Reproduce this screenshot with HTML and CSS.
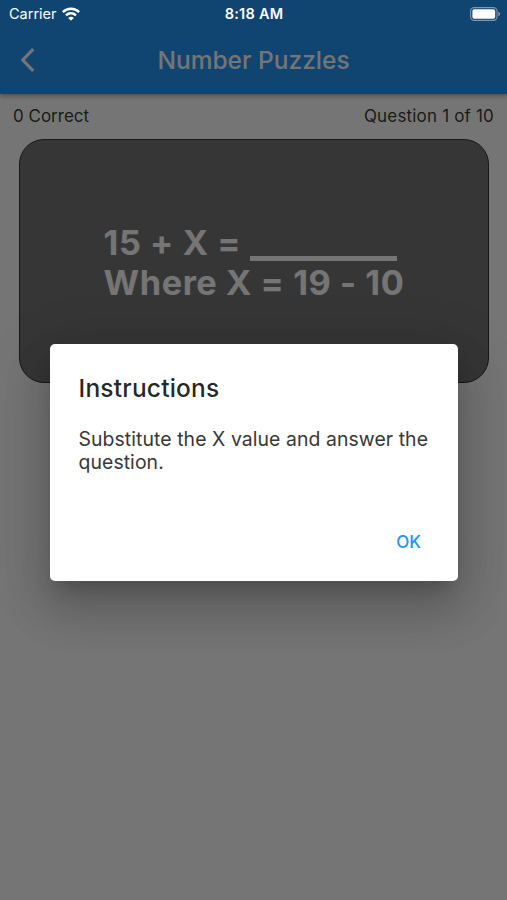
FILE: index.html
```html
<!DOCTYPE html>
<html lang="en">
<head>
  <meta charset="UTF-8">
  <title>Number Puzzles</title>
  <meta name="viewport" content="width=device-width, initial-scale=1.0">
  <link rel="stylesheet" href="styles.css">
</head>
<body>

  <div class="screen">
    <header class="app-bar">
      <button class="back" aria-label="Back">
        <svg width="16" height="26" viewBox="0 0 16 26"><path d="M13.2 2.2 2.8 13l10.4 10.8" fill="none" stroke="currentColor" stroke-width="3.2"/></svg>
      </button>
      <h1>Number Puzzles</h1>
    </header>

    <div class="score">
      <span>0 Correct</span>
      <span class="count">Question 1 of 10</span>
    </div>

    <div class="card">
      <div class="puzzle">
        <div>15 + X = <span class="blank"></span></div>
        <div>Where X = 19 - 10</div>
      </div>
    </div>
  </div>

  <div class="status-bar">
    <div class="carrier">
      <span>Carrier</span>
      <svg width="18" height="14" viewBox="0 0 18 14" fill="none" stroke="#fff" stroke-width="2.4">
        <path d="M.9 5.1a11.5 11.5 0 0 1 16.2 0"/>
        <path d="M4 8.3a7.1 7.1 0 0 1 10 0"/>
        <path d="M9 13.8 6.2 11a4 4 0 0 1 5.6 0z" fill="#fff" stroke="none"/>
      </svg>
    </div>
    <span class="time">8:18 AM</span>
    <svg class="battery" width="31" height="14" viewBox="0 0 31 14">
      <rect x=".6" y=".6" width="26.4" height="12.8" rx="3.6" fill="none" stroke="#fff" stroke-opacity=".45" stroke-width="1.1"/>
      <rect x="2.4" y="2.2" width="22.8" height="9.6" rx="1.8" fill="#fff"/>
      <path d="M28.3 4.8c2.3.8 2.3 3.6 0 4.4z" fill="#fff" fill-opacity=".5"/>
    </svg>
  </div>

  <div class="overlay">
    <div class="dialog" role="dialog">
      <h2>Instructions</h2>
      <p>Substitute the X value and answer the question.</p>
      <button class="ok">OK</button>
    </div>
  </div>

</body>
</html>
```

FILE: styles.css
```css
* {
  box-sizing: border-box;
}

body {
  margin: 0;
  font-family: Inter, "Liberation Sans", sans-serif;
  background-color: #fff;
}

h1, h2, p {
  margin: 0;
}

button {
  border: none;
  background: none;
  padding: 0;
  font-family: inherit;
  cursor: pointer;
}

.screen {
  height: 900px;
  overflow: hidden;
}

.app-bar {
  display: grid;
  grid-template-columns: 56px 1fr 56px;
  align-items: center;
  height: 94px;
  padding-top: 25px;
  background-color: #2196f3;
  color: #fff;
  box-shadow: 0 2px 5px rgba(0, 0, 0, 0.35);
}

.back {
  display: flex;
  justify-content: center;
  color: #fff;
}

h1 {
  font-size: 24.5px;
  font-weight: 500;
  text-align: center;
}

.score {
  display: flex;
  justify-content: space-between;
  padding: 12px 13px 0;
  font-size: 17px;
  line-height: 21px;
  color: rgba(0, 0, 0, 0.8);
}

.count {
  letter-spacing: 0.18px;
}

.card {
  display: flex;
  align-items: center;
  justify-content: center;
  height: 244px;
  margin: 12px 18px 0 19px;
  padding-top: 3px;
  border: 1px solid #333;
  border-radius: 25px;
  background-color: #777;
  color: #fff;
}

.puzzle {
  font-size: 34.3px;
  font-weight: 700;
  line-height: 40px;
  letter-spacing: 0.57px;
  white-space: nowrap;
}

.blank {
  display: inline-block;
  width: 147px;
  height: 5px;
  background-color: #fff;
  vertical-align: -6px;
}

/* stays bright above the dimmed screen */
.status-bar {
  position: absolute;
  top: 0;
  left: 0;
  z-index: 2;
  display: grid;
  grid-template-columns: 1fr auto 1fr;
  align-items: center;
  width: 100%;
  height: 27px;
  padding: 0 6px 0 9px;
  color: #fff;
  font-size: 14.5px;
}

.carrier {
  display: flex;
  align-items: center;
  gap: 5px;
}

.time {
  margin-right: 2px;
  font-weight: 600;
  letter-spacing: 0.25px;
}

.battery {
  justify-self: end;
}

.overlay {
  position: absolute;
  top: 0;
  left: 0;
  z-index: 1;
  display: flex;
  align-items: flex-start;
  justify-content: center;
  width: 100%;
  height: 900px;
  padding-top: 344px;
  background-color: rgba(0, 0, 0, 0.54);
}

.dialog {
  display: flex;
  flex-direction: column;
  width: 408px;
  height: 237px;
  padding: 29px 28px 19px 29px;
  border-radius: 5px;
  background-color: #fff;
  box-shadow: 0 13px 18px -8px rgba(0, 0, 0, 0.2), 0 29px 46px 4px rgba(0, 0, 0, 0.14), 0 11px 56px 10px rgba(0, 0, 0, 0.12);
}

h2 {
  font-size: 24.5px;
  font-weight: 500;
  line-height: 30px;
  letter-spacing: 0.2px;
  color: rgba(0, 0, 0, 0.87);
}

.dialog p {
  margin-top: 25px;
  font-size: 19.4px;
  line-height: 23px;
  letter-spacing: 0.08px;
  color: #383838;
}

.ok {
  align-self: flex-end;
  width: 78px;
  height: 40px;
  margin-top: auto;
  margin-right: -18px;
  color: #2196f3;
  font-size: 17px;
  font-weight: 500;
}
```
